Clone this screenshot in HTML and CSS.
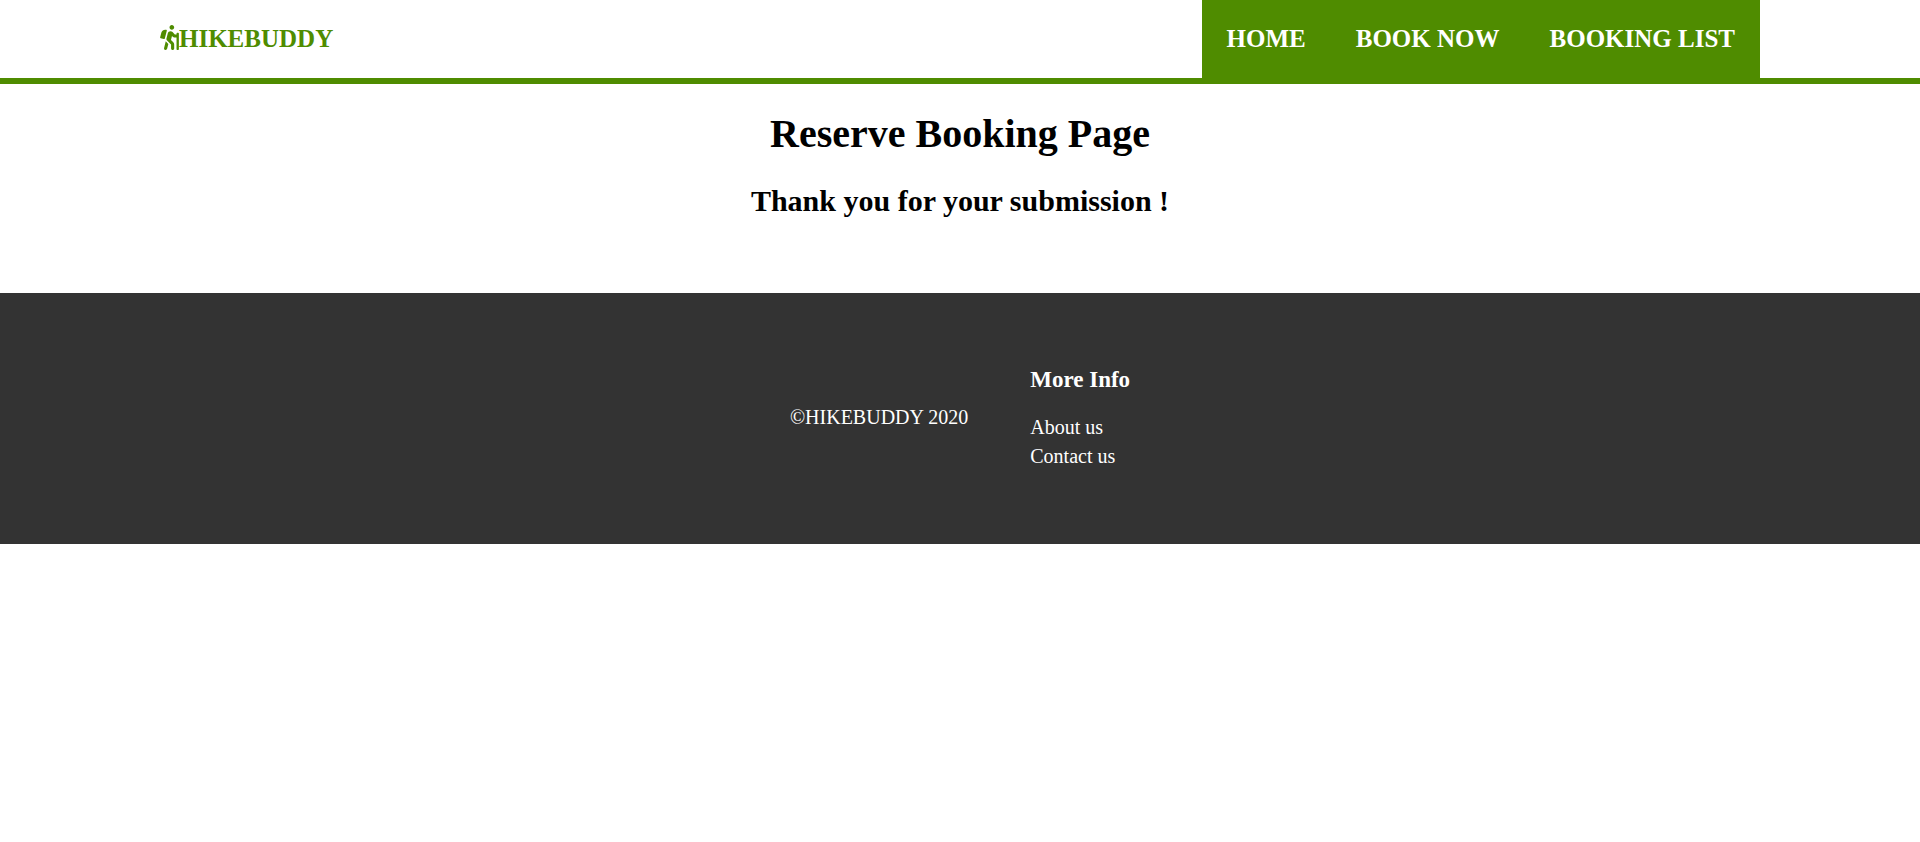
FILE: index.html
```html
<!DOCTYPE html>
<html lang="en">
<head>
  <meta charset="utf-8">
  <meta name="viewport" content="width=device-width, initial-scale=1">
  <title>HIKEBUDDY</title>
  <link rel="stylesheet" href="styles.css">
</head>
<body>
  <header class="header">
    <a class="brand" href="#">
      <svg class="brand-icon" viewBox="0 0 384 512" aria-hidden="true"><path d="M80.95 472.23c-4.28 17.16 6.14 34.53 23.28 38.81 2.61.66 5.22.95 7.8.95 14.33 0 27.37-9.7 31.02-24.23l25.24-100.97-52.78-52.78-34.56 138.22zm14.89-196.12L137 117c2.19-8.42-3.14-16.95-11.92-19.06-43.88-10.52-88.35 15.07-99.32 57.17L.49 253.24c-2.19 8.42 3.14 16.95 11.92 19.06l63.56 15.25c8.79 2.1 17.68-3.02 19.87-11.44zM368 160h-16c-8.84 0-16 7.16-16 16v16h-34.75l-46.78-46.78C243.38 134.11 228.61 128 212.91 128c-27.02 0-50.47 18.3-57.03 44.52l-26.92 107.72a32.012 32.012 0 0 0 8.42 30.39L224 397.25V480c0 17.67 14.33 32 32 32s32-14.33 32-32v-82.75c0-17.09-6.66-33.16-18.75-45.25l-46.82-46.82c.15-.5.49-.89.62-1.41l19.89-79.57 22.43 22.43c6 6 14.14 9.38 22.62 9.38h48v240c0 8.84 7.16 16 16 16h16c8.84 0 16-7.16 16-16V176c.01-8.84-7.15-16-15.99-16zM240 96c26.51 0 48-21.49 48-48S266.51 0 240 0s-48 21.49-48 48 21.49 48 48 48z"/></svg>
      <span>HIKEBUDDY</span>
    </a>
    <nav class="nav">
      <a class="nav-link" href="#">HOME</a>
      <a class="nav-link" href="#">BOOK NOW</a>
      <a class="nav-link" href="#">BOOKING LIST</a>
    </nav>
  </header>
  <main class="main">
    <h1 class="title">Reserve Booking Page</h1>
    <h2 class="message">Thank you for your submission !</h2>
  </main>
  <footer class="footer">
    <p class="copyright">©HIKEBUDDY 2020</p>
    <section>
      <h3 class="footer-title">More Info</h3>
      <ul class="footer-links">
        <li><a class="footer-link" href="#">About us</a></li>
        <li><a class="footer-link" href="#">Contact us</a></li>
      </ul>
    </section>
  </footer>
</body>
</html>
```
FILE: styles.css
```css
body {
  margin: 0;
  background: #fff;
  color: #000;
  font-family: "Liberation Serif", "Times New Roman", serif;
  font-size: 20px;
  line-height: 23px;
}

a {
  text-decoration: none;
}

.header {
  display: flex;
  justify-content: space-between;
  align-items: center;
  padding: 0 160px;
  border-bottom: 6px solid #4f8c00;
  font-size: 25px;
  font-weight: bold;
  line-height: 28px;
}

.brand {
  display: flex;
  align-items: flex-start;
  color: #4f8c00;
}

.brand-icon {
  width: 19px;
  height: 25px;
  fill: currentColor;
}

.nav {
  display: flex;
  background: #4f8c00;
}

.nav-link {
  padding: 25px;
  color: #fff;
}

.main {
  padding: 27px 0 75px;
  text-align: center;
}

.title {
  margin: 0 0 26px;
  font-size: 40px;
  line-height: 46px;
}

.message {
  margin: 0;
  font-size: 30px;
  line-height: 35px;
}

.footer {
  display: flex;
  justify-content: center;
  align-items: center;
  gap: 62px;
  padding: 74px 0 76px;
  background: #333;
  color: #fff;
}

.copyright {
  margin: 0;
}

.footer-title {
  margin: 0 0 23px;
  font-size: 23px;
  line-height: 26px;
}

.footer-links {
  display: grid;
  gap: 6px;
  margin: 0;
  padding: 0;
  list-style: none;
}

.footer-link {
  color: #fff;
}
```
